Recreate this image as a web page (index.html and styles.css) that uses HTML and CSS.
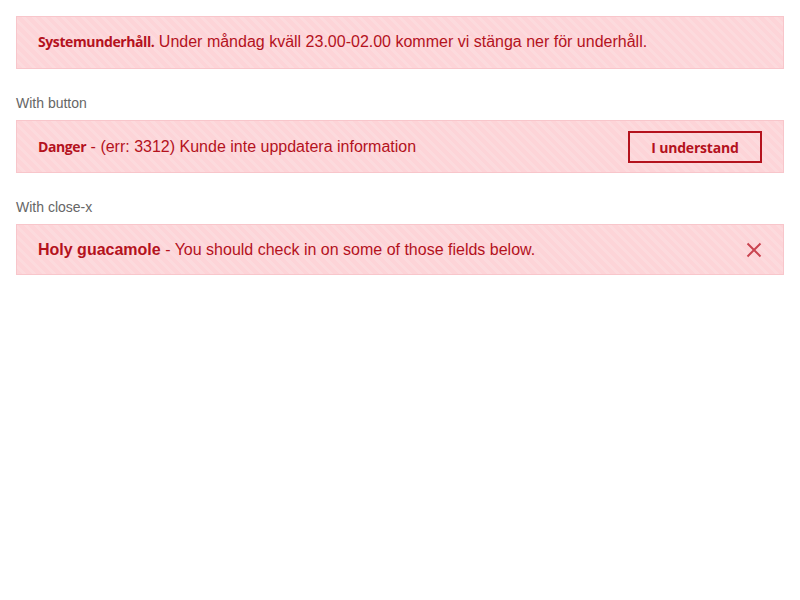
FILE: index.html
```html
<!DOCTYPE html>
<html lang="sv">
<head>
<meta charset="utf-8">
<title>Alerts</title>
<link rel="stylesheet" href="styles.css">
</head>
<body>
<main class="page">
  <div class="alert">
    <p class="alert-text"><strong class="brand-bold">Systemunderhåll.</strong> Under måndag kväll 23.00-02.00 kommer vi stänga ner för underhåll.</p>
  </div>

  <p class="label">With button</p>
  <div class="alert alert-btn">
    <p class="alert-text"><strong class="brand-bold">Danger</strong> - (err: 3312) Kunde inte uppdatera information</p>
    <button class="btn" type="button">I understand</button>
  </div>

  <p class="label">With close-x</p>
  <div class="alert alert-close">
    <p class="alert-text"><strong class="plain-bold">Holy guacamole</strong> - You should check in on some of those fields below.</p>
    <button class="close" type="button" aria-label="Close">
      <svg width="16" height="16" viewBox="0 0 16 16"><path d="M1.5 1.5 L14.5 14.5 M14.5 1.5 L1.5 14.5" stroke="currentColor" stroke-width="2" fill="none"/></svg>
    </button>
  </div>
</main>
</body>
</html>
```

FILE: styles.css
```css
* { box-sizing: border-box; }
html, body { margin: 0; padding: 0; background: #fff; }
body {
  font-family: "Liberation Sans", Arial, sans-serif;
  font-size: 16px;
  color: #b4121d;
}
.page {
  padding: 16px;
  display: flex;
  flex-direction: column;
}
.alert {
  display: flex;
  align-items: center;
  justify-content: space-between;
  border: 1px solid #f8c6cb;
  background-color: #fdd4d8;
  background-image: repeating-linear-gradient(45deg, #fdd4d8 0px, #fdd4d8 4px, #fcdadd 4px, #fcdadd 7px);
  padding: 13px 21px 14px;
  min-height: 53px;
}
.alert-btn { padding: 10px 21px 9px; }
.alert-close { min-height: 51px; padding: 13px 21px 12px; }
.alert-text {
  margin: 0;
  line-height: 24px;
}
.brand-bold {
  font-family: "Open Sans", sans-serif;
  font-weight: 700;
  font-size: 14px;
  letter-spacing: -0.4px;
}
.plain-bold { font-weight: 700; }
.label {
  margin: 24px 0 7px;
  font-size: 14px;
  line-height: 20px;
  color: #666;
}
.btn {
  width: 134px;
  height: 32px;
  border: 2px solid #b4121d;
  background: transparent;
  color: #b4121d;
  font-family: "Open Sans", sans-serif;
  font-weight: 700;
  font-size: 14px;
  letter-spacing: -0.2px;
  padding: 0;
  cursor: pointer;
}
.close {
  border: 0;
  background: transparent;
  color: #c94450;
  padding: 0;
  width: 16px;
  height: 16px;
  display: flex;
  cursor: pointer;
}
```
